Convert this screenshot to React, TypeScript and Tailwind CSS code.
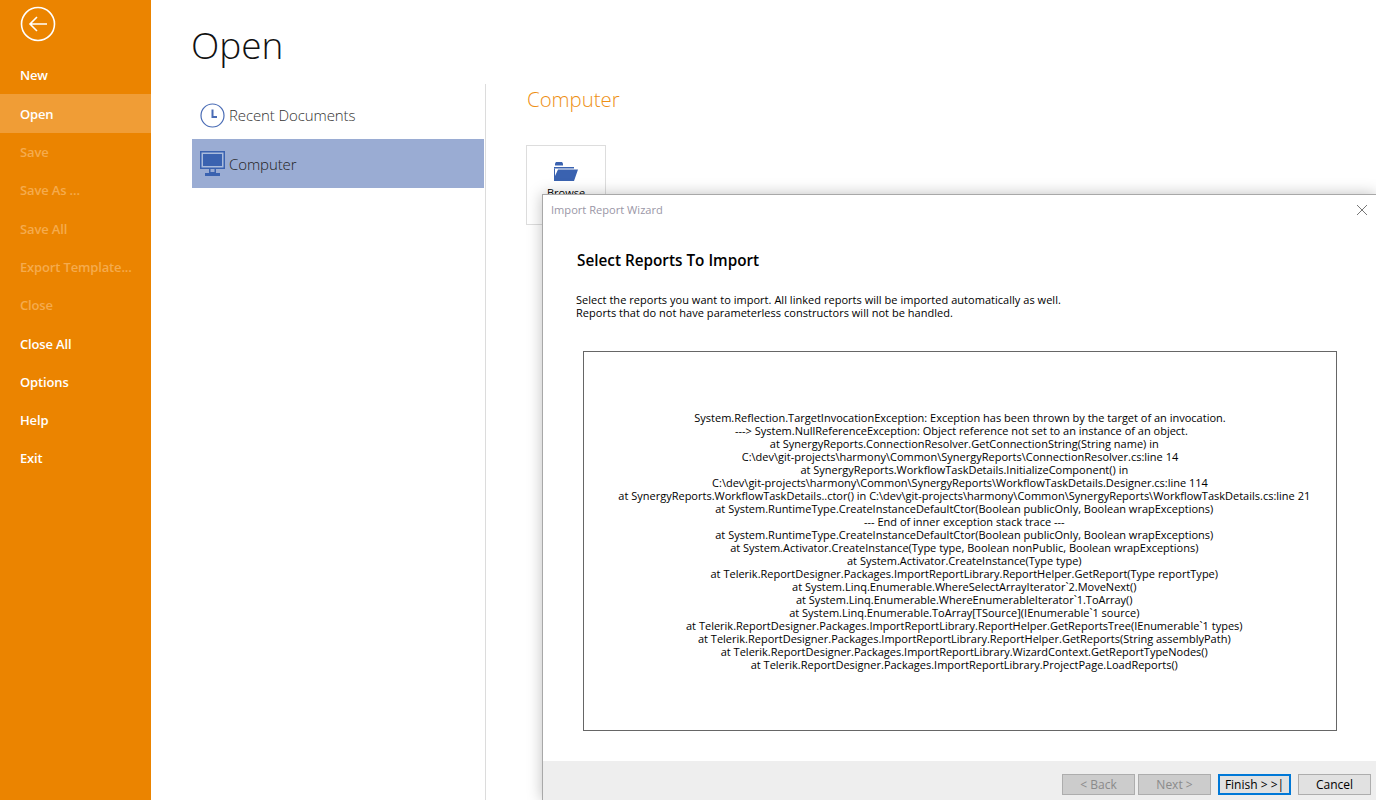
import React from "react";

const font = { fontFamily: '"Open Sans", "Noto Sans", sans-serif' };

const menu = [
  { label: "New", on: true },
  { label: "Open", on: true, active: true },
  { label: "Save" },
  { label: "Save As ..." },
  { label: "Save All" },
  { label: "Export Template..." },
  { label: "Close" },
  { label: "Close All", on: true },
  { label: "Options", on: true },
  { label: "Help", on: true },
  { label: "Exit", on: true },
];

// stack trace keeps its leading spaces, they shift the centred lines
const trace = [
  "System.Reflection.TargetInvocationException: Exception has been thrown by the target of an invocation.",
  " ---> System.NullReferenceException: Object reference not set to an instance of an object.",
  "   at SynergyReports.ConnectionResolver.GetConnectionString(String name) in",
  "C:\\dev\\git-projects\\harmony\\Common\\SynergyReports\\ConnectionResolver.cs:line 14",
  "   at SynergyReports.WorkflowTaskDetails.InitializeComponent() in",
  "C:\\dev\\git-projects\\harmony\\Common\\SynergyReports\\WorkflowTaskDetails.Designer.cs:line 114",
  "   at SynergyReports.WorkflowTaskDetails..ctor() in C:\\dev\\git-projects\\harmony\\Common\\SynergyReports\\WorkflowTaskDetails.cs:line 21",
  "   at System.RuntimeType.CreateInstanceDefaultCtor(Boolean publicOnly, Boolean wrapExceptions)",
  "   --- End of inner exception stack trace ---",
  "   at System.RuntimeType.CreateInstanceDefaultCtor(Boolean publicOnly, Boolean wrapExceptions)",
  "   at System.Activator.CreateInstance(Type type, Boolean nonPublic, Boolean wrapExceptions)",
  "   at System.Activator.CreateInstance(Type type)",
  "   at Telerik.ReportDesigner.Packages.ImportReportLibrary.ReportHelper.GetReport(Type reportType)",
  "   at System.Linq.Enumerable.WhereSelectArrayIterator`2.MoveNext()",
  "   at System.Linq.Enumerable.WhereEnumerableIterator`1.ToArray()",
  "   at System.Linq.Enumerable.ToArray[TSource](IEnumerable`1 source)",
  "   at Telerik.ReportDesigner.Packages.ImportReportLibrary.ReportHelper.GetReportsTree(IEnumerable`1 types)",
  "   at Telerik.ReportDesigner.Packages.ImportReportLibrary.ReportHelper.GetReports(String assemblyPath)",
  "   at Telerik.ReportDesigner.Packages.ImportReportLibrary.WizardContext.GetReportTypeNodes()",
  "   at Telerik.ReportDesigner.Packages.ImportReportLibrary.ProjectPage.LoadReports()",
];

const BackIcon = () => (
  <svg width="36" height="36" viewBox="0 0 36 36" fill="none" stroke="white">
    <circle cx="18" cy="18" r="16.5" strokeWidth="1.6" />
    <path d="M10 18H27M17 11l-7 7 7 7" strokeWidth="1.6" />
  </svg>
);

const ClockIcon = () => (
  <svg width="25" height="25" viewBox="0 0 25 25" fill="none" stroke="#4a6cb5">
    <circle cx="12.5" cy="12.5" r="11.5" strokeWidth="1.2" />
    <path d="M12.5 6.5v7.5H17" strokeWidth="2" />
  </svg>
);

const MonitorIcon = () => (
  <svg width="25" height="25" viewBox="0 0 25 25">
    <path d="M0 0h25v18H0z" fill="#3a62b0" />
    <path d="M1.5 1.5h22v15h-22z" fill="#a9bbdc" />
    <path d="M3 3h19v12H3z" fill="#3a62b0" />
    <path d="M9 18h1.5v3h4v-3H16v4H9z" fill="#3a62b0" />
    <path d="M5 22h15v3H5z" fill="#3a62b0" />
  </svg>
);

const FolderIcon = () => (
  <svg width="24" height="20" viewBox="0 0 24 20">
    <path d="M1 1.5 2 0h6l1 1.5v2H1z" fill="#3a62b0" />
    <path d="M0 5h20v1.5H0z" fill="#3a62b0" />
    <path d="M0 6.5h1V14L4 7.5h20L20 19H0z" fill="#3a62b0" />
  </svg>
);

const WizardButton = ({ label, disabled, primary }: { label: string; disabled?: boolean; primary?: boolean }) => (
  <button
    className={
      "h-[21px] w-[73px] text-[12px] leading-none " +
      (disabled
        ? "border border-[#adadad] bg-[#cccccc] text-[#8a8a8a]"
        : primary
          ? "border-2 border-[#0078d7] bg-[#e1e1e1] text-black"
          : "border border-[#adadad] bg-[#e1e1e1] text-black")
    }
  >
    {label}
  </button>
);

export default function App() {
  return (
    <div className="relative flex h-[800px] w-[1376px] overflow-hidden bg-white" style={font}>
      <aside className="flex w-[151px] shrink-0 flex-col bg-[#eb8400]">
        <div className="h-[56.1px] pl-[20px] pt-[6px]">
          <BackIcon />
        </div>
        <nav className="flex flex-col">
          {menu.map((item) => (
            <div
              key={item.label}
              className={
                "flex h-[38.3px] items-center pl-[20px] pt-[2px] text-[13px] font-semibold tracking-[-0.15px] " +
                (item.active ? "bg-[#f09d36] text-white" : item.on ? "text-white" : "text-[#f5ab4d]")
              }
            >
              {item.label}
            </div>
          ))}
        </nav>
      </aside>

      <main className="flex min-w-0 flex-1 flex-col pl-[41px]">
        <h1 className="-ml-[1px] h-[84px] pt-[17px] text-[37px] font-light leading-[56px] text-[#111]">Open</h1>
        <div className="flex flex-1">
          <div className="w-[292px] shrink-0">
            <div className="flex h-[55px] items-center gap-[4px] pl-[8px] pt-[7px] text-[15px] font-light tracking-[-0.1px] text-[#333]">
              <ClockIcon />
              <span>Recent Documents</span>
            </div>
            <div className="flex h-[49px] items-center gap-[4px] bg-[#9aacd3] pl-[8px] text-[15px] font-light tracking-[-0.1px] text-[#222]">
              <MonitorIcon />
              <span className="pt-[1px]">Computer</span>
            </div>
          </div>
          <div className="ml-[1px] w-[1px] bg-[#dcdcdc]" />
          <div className="pl-[40px]">
            <h2 className="ml-[1px] pt-[1px] text-[20.4px] font-light leading-[28px] text-[#ee8f14]">Computer</h2>
            <div className="mt-[32px] flex h-[80px] w-[80px] flex-col items-center border border-[#dddddd] pt-[16px]">
              <FolderIcon />
              <span className="mt-[3px] text-[11px] text-black">Browse</span>
            </div>
          </div>
        </div>
      </main>

      {/* Wizard dialog */}
      <div className="absolute left-[542px] top-[194px] flex h-[606px] w-[834px] flex-col border-l border-t border-[#a8a8a8] bg-white shadow-[0_0_14px_rgba(0,0,0,0.25)]">
        <div className="flex h-[31px] items-center justify-between pl-[8px] pr-[8px] text-[11.1px] text-[#9a96a6]">
          <span>Import Report Wizard</span>
          <svg className="-mt-[2px]" width="12" height="12" viewBox="0 0 12 12" stroke="#777" fill="none">
            <path d="M1 1l10 10M11 1L1 11" />
          </svg>
        </div>
        <div className="flex-1 pl-[34px]">
          <h3 className="pt-[23px] text-[15.3px] font-semibold leading-[22px] text-black">Select Reports To Import</h3>
          <p className="-ml-[1px] mt-[22px] text-[11px] leading-[13px] tracking-[0.03px] text-black">
            Select the reports you want to import. All linked reports will be imported automatically as well.
            <br />
            Reports that do not have parameterless constructors will not be handled.
          </p>
          <div className="ml-[6px] mt-[32px] flex h-[380px] w-[754px] flex-col items-center justify-center border border-[#666666] text-center text-[11px] leading-[13px] text-black">
            {trace.map((line, i) => (
              <div key={i} className="whitespace-pre">{line}</div>
            ))}
          </div>
        </div>
        <div className="flex h-[39px] items-start justify-end gap-[7px] bg-[#eeeeee] pr-[5px] pt-[13px]">
          <div className="flex gap-[3px]">
            <WizardButton label="< Back" disabled />
            <WizardButton label="Next >" disabled />
          </div>
          <WizardButton label="Finish > >|" primary />
          <WizardButton label="Cancel" />
        </div>
      </div>
    </div>
  );
}
